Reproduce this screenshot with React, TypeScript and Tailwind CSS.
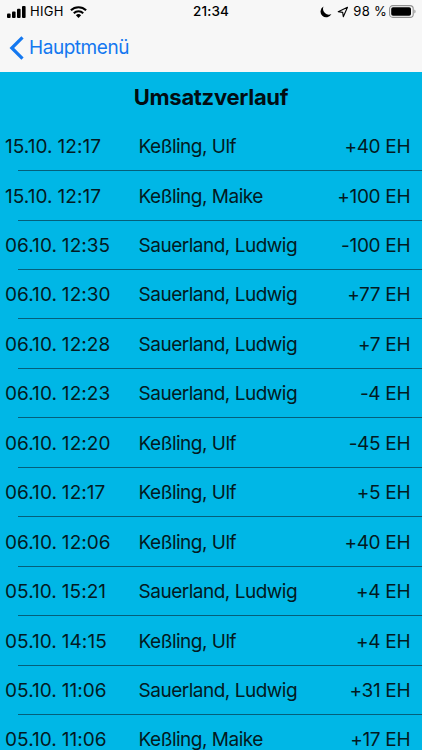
type Booking = { date: string; name: string; amount: string };

const bookings: Booking[] = [
  { date: "15.10. 12:17", name: "Keßling, Ulf", amount: "+40 EH" },
  { date: "15.10. 12:17", name: "Keßling, Maike", amount: "+100 EH" },
  { date: "06.10. 12:35", name: "Sauerland, Ludwig", amount: "-100 EH" },
  { date: "06.10. 12:30", name: "Sauerland, Ludwig", amount: "+77 EH" },
  { date: "06.10. 12:28", name: "Sauerland, Ludwig", amount: "+7 EH" },
  { date: "06.10. 12:23", name: "Sauerland, Ludwig", amount: "-4 EH" },
  { date: "06.10. 12:20", name: "Keßling, Ulf", amount: "-45 EH" },
  { date: "06.10. 12:17", name: "Keßling, Ulf", amount: "+5 EH" },
  { date: "06.10. 12:06", name: "Keßling, Ulf", amount: "+40 EH" },
  { date: "05.10. 15:21", name: "Sauerland, Ludwig", amount: "+4 EH" },
  { date: "05.10. 14:15", name: "Keßling, Ulf", amount: "+4 EH" },
  { date: "05.10. 11:06", name: "Sauerland, Ludwig", amount: "+31 EH" },
  { date: "05.10. 11:06", name: "Keßling, Maike", amount: "+17 EH" },
];

function SignalIcon() {
  return (
    <svg width="19" height="12" viewBox="0 0 19 12">
      <rect x="0" y="7.6" width="3.6" height="4.4" rx="1" />
      <rect x="5" y="5.4" width="3.6" height="6.6" rx="1" />
      <rect x="10" y="2.8" width="3.6" height="9.2" rx="1" />
      <rect x="15" y="0" width="3.6" height="12" rx="1" />
    </svg>
  );
}

function WifiIcon() {
  return (
    <svg width="17" height="12" viewBox="0 0 17 12" fill="none" stroke="#000" strokeWidth="2.1">
      <path d="M.9 4.3a10.9 10.9 0 0 1 15.2 0" />
      <path d="M3.8 7.2a6.8 6.8 0 0 1 9.4 0" />
      <path d="M8.5 12 5.9 9.3a3.8 3.8 0 0 1 5.2 0Z" fill="#000" stroke="none" />
    </svg>
  );
}

function StatusBar() {
  return (
    <div className="grid h-[23px] grid-cols-[1fr_auto_1fr] items-center text-[13.5px] leading-[23px] font-medium text-black">
      <div className="flex items-center pl-[7px]">
        <SignalIcon />
        <span className="ml-[4px] text-[13px] font-normal tracking-[0.3px]">HIGH</span>
        <span className="ml-[6px]"><WifiIcon /></span>
      </div>
      <span className="tracking-[0.1px]">21:34</span>
      <div className="flex items-center justify-end pr-[6px]">
        <svg width="12" height="12" viewBox="0 0 12 12">
          <path d="M3.5.6A5.7 5.7 0 1 0 11.4 8 5.8 5.8 0 0 1 3.5.6Z" />
        </svg>
        <svg className="ml-[5px]" width="12" height="12" viewBox="0 0 12 12" fill="none" stroke="#000" strokeWidth="1.1" strokeLinejoin="round">
          <path d="M10.5 1.3 6.3 10.8 5.7 6.4 1.2 5.7Z" />
        </svg>
        <span className="ml-[4px] text-[13px] font-normal tracking-[0.3px]">98 %</span>
        <svg className="ml-[2px]" width="27" height="13" viewBox="0 0 27 13">
          <rect x=".6" y=".6" width="23.6" height="11.8" rx="3.2" fill="none" stroke="#929292" strokeWidth="1.1" />
          <rect x="2.2" y="2.2" width="19.8" height="8.6" rx="1.8" />
          <path d="M25.4 4.5c1.5.6 1.5 3.4 0 4Z" fill="#929292" />
        </svg>
      </div>
    </div>
  );
}

export default function App() {
  return (
    <div className="flex h-[750px] w-[422px] flex-col overflow-hidden bg-[#00b7e6] font-['Inter','Liberation_Sans',sans-serif]">
      <header className="h-[72px] shrink-0 bg-[#f7f7f7]">
        <StatusBar />
        <button className="flex h-[49px] items-center pl-[9px] text-[19px] text-[#1478f0]">
          <svg width="15" height="24" viewBox="0 0 15 24" fill="none" stroke="currentColor" strokeWidth="3.2">
            <path d="M13.5 1.3 2.8 12l10.7 10.7" />
          </svg>
          <span className="ml-[5px] pt-[2px] tracking-[-0.45px]">Hauptmenü</span>
        </button>
      </header>
      <h1 className="h-[49.7px] shrink-0 text-center text-[22px] leading-[50px] font-bold tracking-[-0.3px] text-[#020d12]">
        Umsatzverlauf
      </h1>
      <ul className="text-[19px] text-[#031a22]">
        {bookings.map((b, i) => (
          <li key={i} className="flex h-[49.45px] flex-col">
            <div className="grid flex-1 grid-cols-[134px_1fr_auto] items-center pt-[3px] pr-[12px] pl-[5px] whitespace-nowrap">
              <span className="tracking-[0.05px] [word-spacing:-0.5px]">{b.date}</span>
              <span className="-ml-[0.4px] tracking-[-0.5px]">{b.name}</span>
              <span className="-mr-[0.3px] tracking-[-0.3px]">{b.amount}</span>
            </div>
            <div className="ml-[18px] h-px bg-[#045f7b]" />
          </li>
        ))}
      </ul>
    </div>
  );
}
